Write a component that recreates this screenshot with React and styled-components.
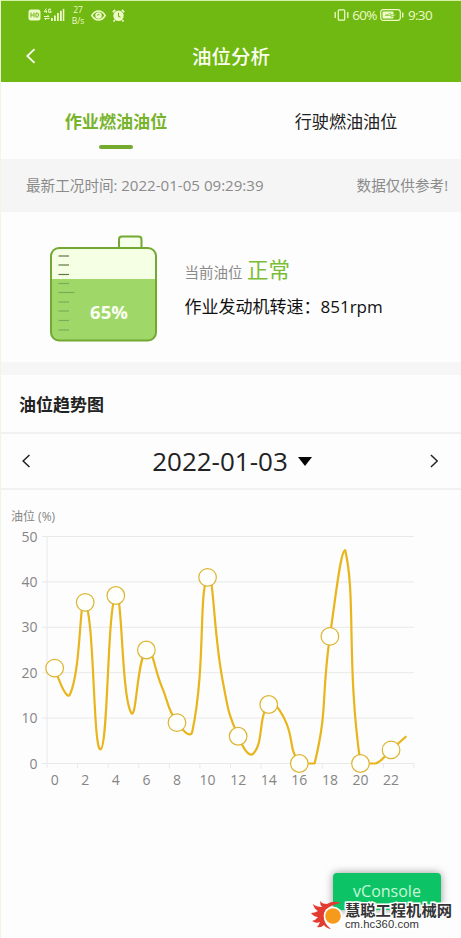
import { useState } from 'react';
import styled, { createGlobalStyle } from 'styled-components';

const GlobalStyle = createGlobalStyle`
  * {
    box-sizing: border-box;
  }

  body {
    margin: 0;
    background: #fdfdfd;
    font-family: 'Open Sans', 'Noto Sans CJK SC', sans-serif;
    color: #222;
  }
`;

const Page = styled.div`
  display: flex;
  flex-direction: column;
  width: 461px;
  height: 938px;
  overflow: hidden;
  background: #fdfdfd;
  border-top: 1px solid #d5f0a5;
  border-left: 1px solid #eef7df;
`;

const Header = styled.header`
  height: 81px;
  background: #70b812;
  color: #fbfff0;
`;

const StatusBar = styled.div`
  display: flex;
  justify-content: space-between;
  align-items: center;
  height: 28px;
  padding: 0 29px 0 27px;
`;

const StatusGroup = styled.div`
  display: flex;
  align-items: center;
  gap: ${({ $gap }) => $gap}px;
  font-size: 13.5px;
  line-height: 28px;
  letter-spacing: -0.65px;
  color: #eefbc8;
`;

const NetSpeed = styled.div`
  display: flex;
  flex-direction: column;
  align-items: center;
  width: 15px;
  font-size: 8.5px;
  line-height: 11px;
  letter-spacing: 0;
`;

const TitleBar = styled.div`
  display: grid;
  grid-template-columns: 60px 1fr 60px;
  align-items: center;
  height: 53px;
`;

const Title = styled.h1`
  margin: 0;
  padding-top: 2px;
  text-align: center;
  font-size: 19.5px;
  font-weight: 500;
  line-height: 28px;
`;

const IconButton = styled.button`
  display: flex;
  align-items: center;
  padding: ${({ $pad }) => $pad || '0'};
  border: none;
  background: none;
  color: inherit;
`;

const Tabs = styled.nav`
  display: grid;
  grid-template-columns: 1fr 1fr;
  height: 77px;
`;

const Tab = styled.button`
  display: flex;
  flex-direction: column;
  align-items: center;
  gap: 11px;
  padding: 27px 0 0;
  border: none;
  background: none;
  font-family: inherit;
  font-size: 17.1px;
  line-height: 25px;
  font-weight: ${({ $active }) => ($active ? 700 : 400)};
  color: ${({ $active }) => ($active ? '#78b32c' : '#222')};

  &::after {
    content: '';
    width: 34px;
    height: 3.5px;
    border-radius: 2px;
    background: ${({ $active }) => ($active ? '#74ab2e' : 'transparent')};
  }
`;

const InfoBar = styled.div`
  display: flex;
  justify-content: space-between;
  align-items: center;
  height: 53px;
  padding: 0 13px 2px 25px;
  background: #f5f5f5;
  font-size: 14.6px;
  color: #8b8b8b;
`;

const Timestamp = styled.span`
  font-size: 15.1px;
`;

const TankPanel = styled.section`
  display: flex;
  height: 150px;
  padding: 22px 0 0 48px;
`;

const TankInfo = styled.div`
  display: flex;
  flex-direction: column;
  padding: 19px 0 0 25.5px;
`;

const LevelLine = styled.div`
  display: flex;
  align-items: baseline;
  gap: 4.5px;
  height: 34px;
  line-height: 34px;
  font-size: 14.5px;
  color: #8a8a8a;
`;

const LevelState = styled.span`
  font-size: 21.5px;
  color: #7bbd34;
`;

const SpeedLine = styled.div`
  display: flex;
  padding-top: 7px;
  line-height: 26px;
  font-size: 17px;
  color: #111;
`;

const Divider = styled.div`
  height: 13px;
  background: #f6f6f6;
`;

const SectionTitle = styled.h2`
  height: 59px;
  margin: 0;
  padding-left: 18px;
  border-bottom: 2px solid #f1f1f1;
  font-size: 17px;
  line-height: 59px;
  font-weight: 700;
`;

const DateBar = styled.div`
  display: grid;
  grid-template-columns: 60px 1fr 60px;
  align-items: center;
  height: 56px;
  border-bottom: 2px solid #f1f1f1;
`;

const DateValue = styled.div`
  display: flex;
  justify-content: center;
  align-items: center;
  gap: 10px;
  padding-left: 2px;
  font-size: 26px;
  line-height: 36px;
`;

const Caret = styled.span`
  border: 7.5px solid transparent;
  border-top: 9px solid #050505;
  border-bottom: none;
`;

const ChartText = styled.text`
  font-size: ${({ $size }) => $size || 14}px;
  fill: #858585;
`;

const Footer = styled.footer`
  position: relative;
  display: flex;
  justify-content: flex-end;
  margin-top: auto;
  height: 65px;
  padding-right: 20px;
`;

const ConsoleButton = styled.button`
  width: 108px;
  height: 37px;
  padding: 0;
  border: none;
  border-radius: 4px;
  background: #0cc465;
  box-shadow: 0 0 8px rgba(0, 0, 0, 0.4);
  font-family: inherit;
  font-size: 16px;
  line-height: 37px;
  color: #c9f7d9;
`;

const Watermark = styled.div`
  position: absolute;
  right: 9px;
  bottom: 8px;
  display: flex;
  align-items: center;
  gap: 1px;
`;

const WatermarkText = styled.div`
  display: flex;
  flex-direction: column;
  color: #343434;
  -webkit-text-stroke: 3px #fff;
  paint-order: stroke fill;
`;

const SiteName = styled.span`
  font-family: 'Noto Sans CJK SC', sans-serif;
  font-size: 15.3px;
  line-height: 18px;
  font-weight: 700;
`;

const SiteUrl = styled.span`
  font-family: 'Liberation Sans', sans-serif;
  font-size: 11.3px;
  line-height: 12px;
  font-weight: 400;
  letter-spacing: 0.05px;
`;

const TICKS = [22, 31, 40.5, 49.5, 58.5, 68, 77, 86.5, 96];

const LEVELS = [
  21, 15.2, 35.5, 3.1, 37, 11.2, 25, 17, 9, 7, 41, 18,
  6, 2.2, 13, 10, 0, 0, 28, 47, 0, 0, 3, 6,
];

const PLOT = { left: 46, right: 413, top: 46.5, bottom: 273.5, max: 50 };
const STEP = (PLOT.right - PLOT.left) / LEVELS.length;

const toX = (i) => PLOT.left + STEP * (i + 0.5);
const toY = (v) => PLOT.bottom - (v / PLOT.max) * (PLOT.bottom - PLOT.top);

// Bezier through every point, control points stay within the range of the data
const smoothPath = (points, smooth = 0.5) => {
  const ys = points.map((p) => p[1]);
  const minY = Math.min(...ys);
  const maxY = Math.max(...ys);
  const bound = ([x, y]) => [x, Math.min(maxY, Math.max(minY, y))];

  let d = `M${points[0][0]},${points[0][1]}`;
  let cp0 = points[0];
  for (let i = 1; i < points.length; i++) {
    const prev = points[i - 1];
    const cur = points[i];
    const next = points[i + 1];
    let cp1 = cur;
    let nextCp0 = cur;
    if (next) {
      const lenPrev = Math.hypot(cur[0] - prev[0], cur[1] - prev[1]);
      const lenNext = Math.hypot(next[0] - cur[0], next[1] - cur[1]);
      const ratio = lenNext / (lenNext + lenPrev);
      cp1 = bound(cur.map((c, k) => c - (next[k] - prev[k]) * smooth * (1 - ratio)));
      nextCp0 = bound(cur.map((c, k) => c + (next[k] - prev[k]) * smooth * ratio));
    }
    d += `C${cp0.join(',')} ${cp1.join(',')} ${cur.join(',')}`;
    cp0 = nextCp0;
  }
  return d;
};

const Chevron = ({ size = 14, width = 1.6, right }) => (
  <svg width={size * 0.6} height={size} viewBox="0 0 9 15" fill="none" stroke="currentColor" strokeWidth={width}>
    <path d={right ? 'M1 1l6.8 6.5L1 14' : 'M8 1L1.2 7.5L8 14'} />
  </svg>
);

const SignalIcons = () => (
  <svg width="37" height="14" viewBox="0 0 37 14" fill="#eefbc8">
    <rect x="0.5" y="1.5" width="12" height="11" rx="2.5" />
    <path d="M3 4.5v5M6 4.5v5M3 7h3M8 5h1.2q1.3 0 1.3 2t-1.3 2H8z" fill="none" stroke="#70b812" />
    <path d="M18.2 0.5l-2 3.2h3M18.5 2.3v2.5M23 1.2h-2.3v3.2H23V3h-1" fill="none" stroke="#eefbc8" strokeWidth="1" />
    <path d="M16 8.5h5l-1.5-1.5M21.5 10.5h-5l1.5 1.5" fill="none" stroke="#eefbc8" strokeWidth="1" />
    <rect x="23" y="10" width="1.8" height="3" />
    <rect x="26" y="7.5" width="1.8" height="5.5" />
    <rect x="29" y="5" width="1.8" height="8" />
    <rect x="32" y="2.8" width="1.8" height="10.2" />
    <rect x="34.8" y="0.8" width="1.5" height="12.2" />
  </svg>
);

const EyeIcon = () => (
  <svg width="15" height="11" viewBox="0 0 15 11">
    <path d="M0.8 5.5Q3.5 1 7.5 1T14.2 5.5Q11.5 10 7.5 10T0.8 5.5Z" fill="none" stroke="#eefbc8" strokeWidth="1.5" />
    <circle cx="7.5" cy="5.5" r="3.2" fill="#eefbc8" />
    <path d="M6 5.5q1-1.6 2.6-0.6" fill="none" stroke="#70b812" />
  </svg>
);

const AlarmIcon = () => (
  <svg width="13" height="13" viewBox="0 0 13 13">
    <circle cx="6.5" cy="6.8" r="5.2" fill="#eefbc8" />
    <path d="M0.8 3.2L3.2 0.9M12.2 3.2L9.8 0.9M2.8 11L1.5 12.5M10.2 11l1.3 1.5" stroke="#eefbc8" strokeWidth="1.7" />
    <path d="M6.5 3.8v3.3l2 1.3" fill="none" stroke="#70b812" strokeWidth="1.1" />
  </svg>
);

const VibrateIcon = () => (
  <svg width="15" height="12" viewBox="0 0 15 12" fill="none" stroke="#eefbc8" strokeWidth="1.3">
    <rect x="4.3" y="0.8" width="6.4" height="10.4" rx="1" />
    <path d="M1.2 3v6M13.8 3v6" />
  </svg>
);

const BatteryIcon = () => (
  <svg width="24" height="12" viewBox="0 0 24 12">
    <rect x="0.7" y="0.7" width="19.6" height="10.6" rx="2.5" fill="none" stroke="#eefbc8" strokeWidth="1.2" />
    <rect x="2.5" y="2.5" width="11" height="7" rx="1" fill="#eefbc8" />
    <path d="M5 6.4l5.5-2v1.2h6.5l-5.5 2.4V6.6z" fill="#eefbc8" stroke="#70b812" strokeWidth="0.6" />
    <path d="M22.7 3.5v5" stroke="#eefbc8" strokeWidth="1.4" />
  </svg>
);

const Tank = ({ percent }) => (
  <svg width="110" height="110" viewBox="0 0 110 110">
    <path d="M70 14V5.5Q70 2.5 73 2.5H89.5Q92.5 2.5 92.5 5.5V14" fill="#f6ffe9" stroke="#73a833" strokeWidth="2" />
    <rect x="2" y="14" width="105" height="92.5" rx="8" fill="#f4ffe4" />
    <path d="M2 45H107V98.5Q107 106.5 99 106.5H10Q2 106.5 2 98.5Z" fill="#9fd869" />
    <rect x="2" y="14" width="105" height="92.5" rx="8" fill="none" stroke="#73a833" strokeWidth="2" />
    {TICKS.map((y, i) => (
      <line
        key={y}
        x1="9.5"
        x2={i === 4 ? 25.5 : 20}
        y1={y}
        y2={y}
        stroke={y < 45 ? '#5d7a42' : '#7cab55'}
        strokeWidth="1.2"
      />
    ))}
    <text x="60" y="85" textAnchor="middle" fontSize="18.5" fontWeight="700" fill="#fbfff2">{percent}%</text>
  </svg>
);

const TrendChart = () => {
  const points = LEVELS.map((v, i) => [toX(i), toY(v)]);
  return (
    <svg width="460" height="305" viewBox="0 0 460 305">
      <ChartText x="10" y="30.5" $size={12}>油位 (%)</ChartText>
      {[0, 10, 20, 30, 40, 50].map((v) => (
        <g key={v}>
          <line x1={PLOT.left - 5} x2={PLOT.right} y1={toY(v)} y2={toY(v)} stroke="#e9e9e9" />
          <ChartText x="36.5" y={toY(v) + 5} textAnchor="end">{v}</ChartText>
        </g>
      ))}
      <line x1={PLOT.left} x2={PLOT.left} y1={PLOT.top} y2={PLOT.bottom} stroke="#e9e9e9" />
      {LEVELS.map((v, i) => i % 2 === 0 && (
        <g key={i}>
          <line x1={PLOT.left + STEP * i} x2={PLOT.left + STEP * i} y1={PLOT.bottom} y2={PLOT.bottom + 5} stroke="#e9e9e9" />
          <ChartText x={toX(i)} y="295" textAnchor="middle">{i}</ChartText>
        </g>
      ))}
      <line x1={PLOT.right} x2={PLOT.right} y1={PLOT.bottom} y2={PLOT.bottom + 5} stroke="#e9e9e9" />
      <path d={smoothPath(points)} fill="none" stroke="#e8b51c" strokeWidth="2.2" strokeLinejoin="bevel" />
      {points.map(([x, y], i) => i % 2 === 0 && (
        <circle key={i} cx={x} cy={y} r="8.8" fill="#fffffb" stroke="#dcb432" strokeWidth="1.2" />
      ))}
    </svg>
  );
};

const FlameLogo = () => (
  <svg width="33" height="30" viewBox="0 0 33 30">
    <path
      d="M30 3Q22 0 16 4Q11 4 9 1Q9 5 11 7Q5 7 2 4Q3 9 7 11Q4 13 0 13Q3 17 7 17Q5 20 1 21Q5 24 9 22Q8 25 6 27Q10 28 13 25Q15 28 20 29Q12 23 13 15Q14 6 30 3Z"
      fill="#e23c32"
    />
    <circle cx="22" cy="16" r="9.4" fill="#fff" />
    <circle cx="22" cy="16" r="7.8" fill="#f59a1b" />
  </svg>
);

const TABS = ['作业燃油油位', '行驶燃油油位'];

const App = () => {
  const [activeTab, setActiveTab] = useState(0);

  return (
    <>
      <GlobalStyle />
      <Page>
        <Header>
          <StatusBar>
            <StatusGroup $gap={5.5}>
              <SignalIcons />
              <NetSpeed><span>27</span><span>B/s</span></NetSpeed>
              <EyeIcon />
              <AlarmIcon />
            </StatusGroup>
            <StatusGroup $gap={3.5}>
              <VibrateIcon />
              <span>60%</span>
              <BatteryIcon />
              <span>9:30</span>
            </StatusGroup>
          </StatusBar>
          <TitleBar>
            <IconButton $pad="0 0 0 25px"><Chevron size={16} width={1.7} /></IconButton>
            <Title>油位分析</Title>
          </TitleBar>
        </Header>

        <Tabs>
          {TABS.map((label, i) => (
            <Tab key={label} $active={i === activeTab} onClick={() => setActiveTab(i)}>{label}</Tab>
          ))}
        </Tabs>

        <InfoBar>
          <span>最新工况时间: <Timestamp>2022-01-05 09:29:39</Timestamp></span>
          <span>数据仅供参考!</span>
        </InfoBar>

        <TankPanel>
          <Tank percent={65} />
          <TankInfo>
            <LevelLine>当前油位 <LevelState>正常</LevelState></LevelLine>
            <SpeedLine>作业发动机转速：851rpm</SpeedLine>
          </TankInfo>
        </TankPanel>

        <Divider />

        <SectionTitle>油位趋势图</SectionTitle>
        <DateBar>
          <IconButton $pad="0 0 0 21px"><Chevron /></IconButton>
          <DateValue>2022-01-03 <Caret /></DateValue>
          <IconButton $pad="0 0 0 29px"><Chevron right /></IconButton>
        </DateBar>

        <TrendChart />

        <Footer>
          <ConsoleButton>vConsole</ConsoleButton>
          <Watermark>
            <FlameLogo />
            <WatermarkText>
              <SiteName>慧聪工程机械网</SiteName>
              <SiteUrl>cm.hc360.com</SiteUrl>
            </WatermarkText>
          </Watermark>
        </Footer>
      </Page>
    </>
  );
};

export default App;
